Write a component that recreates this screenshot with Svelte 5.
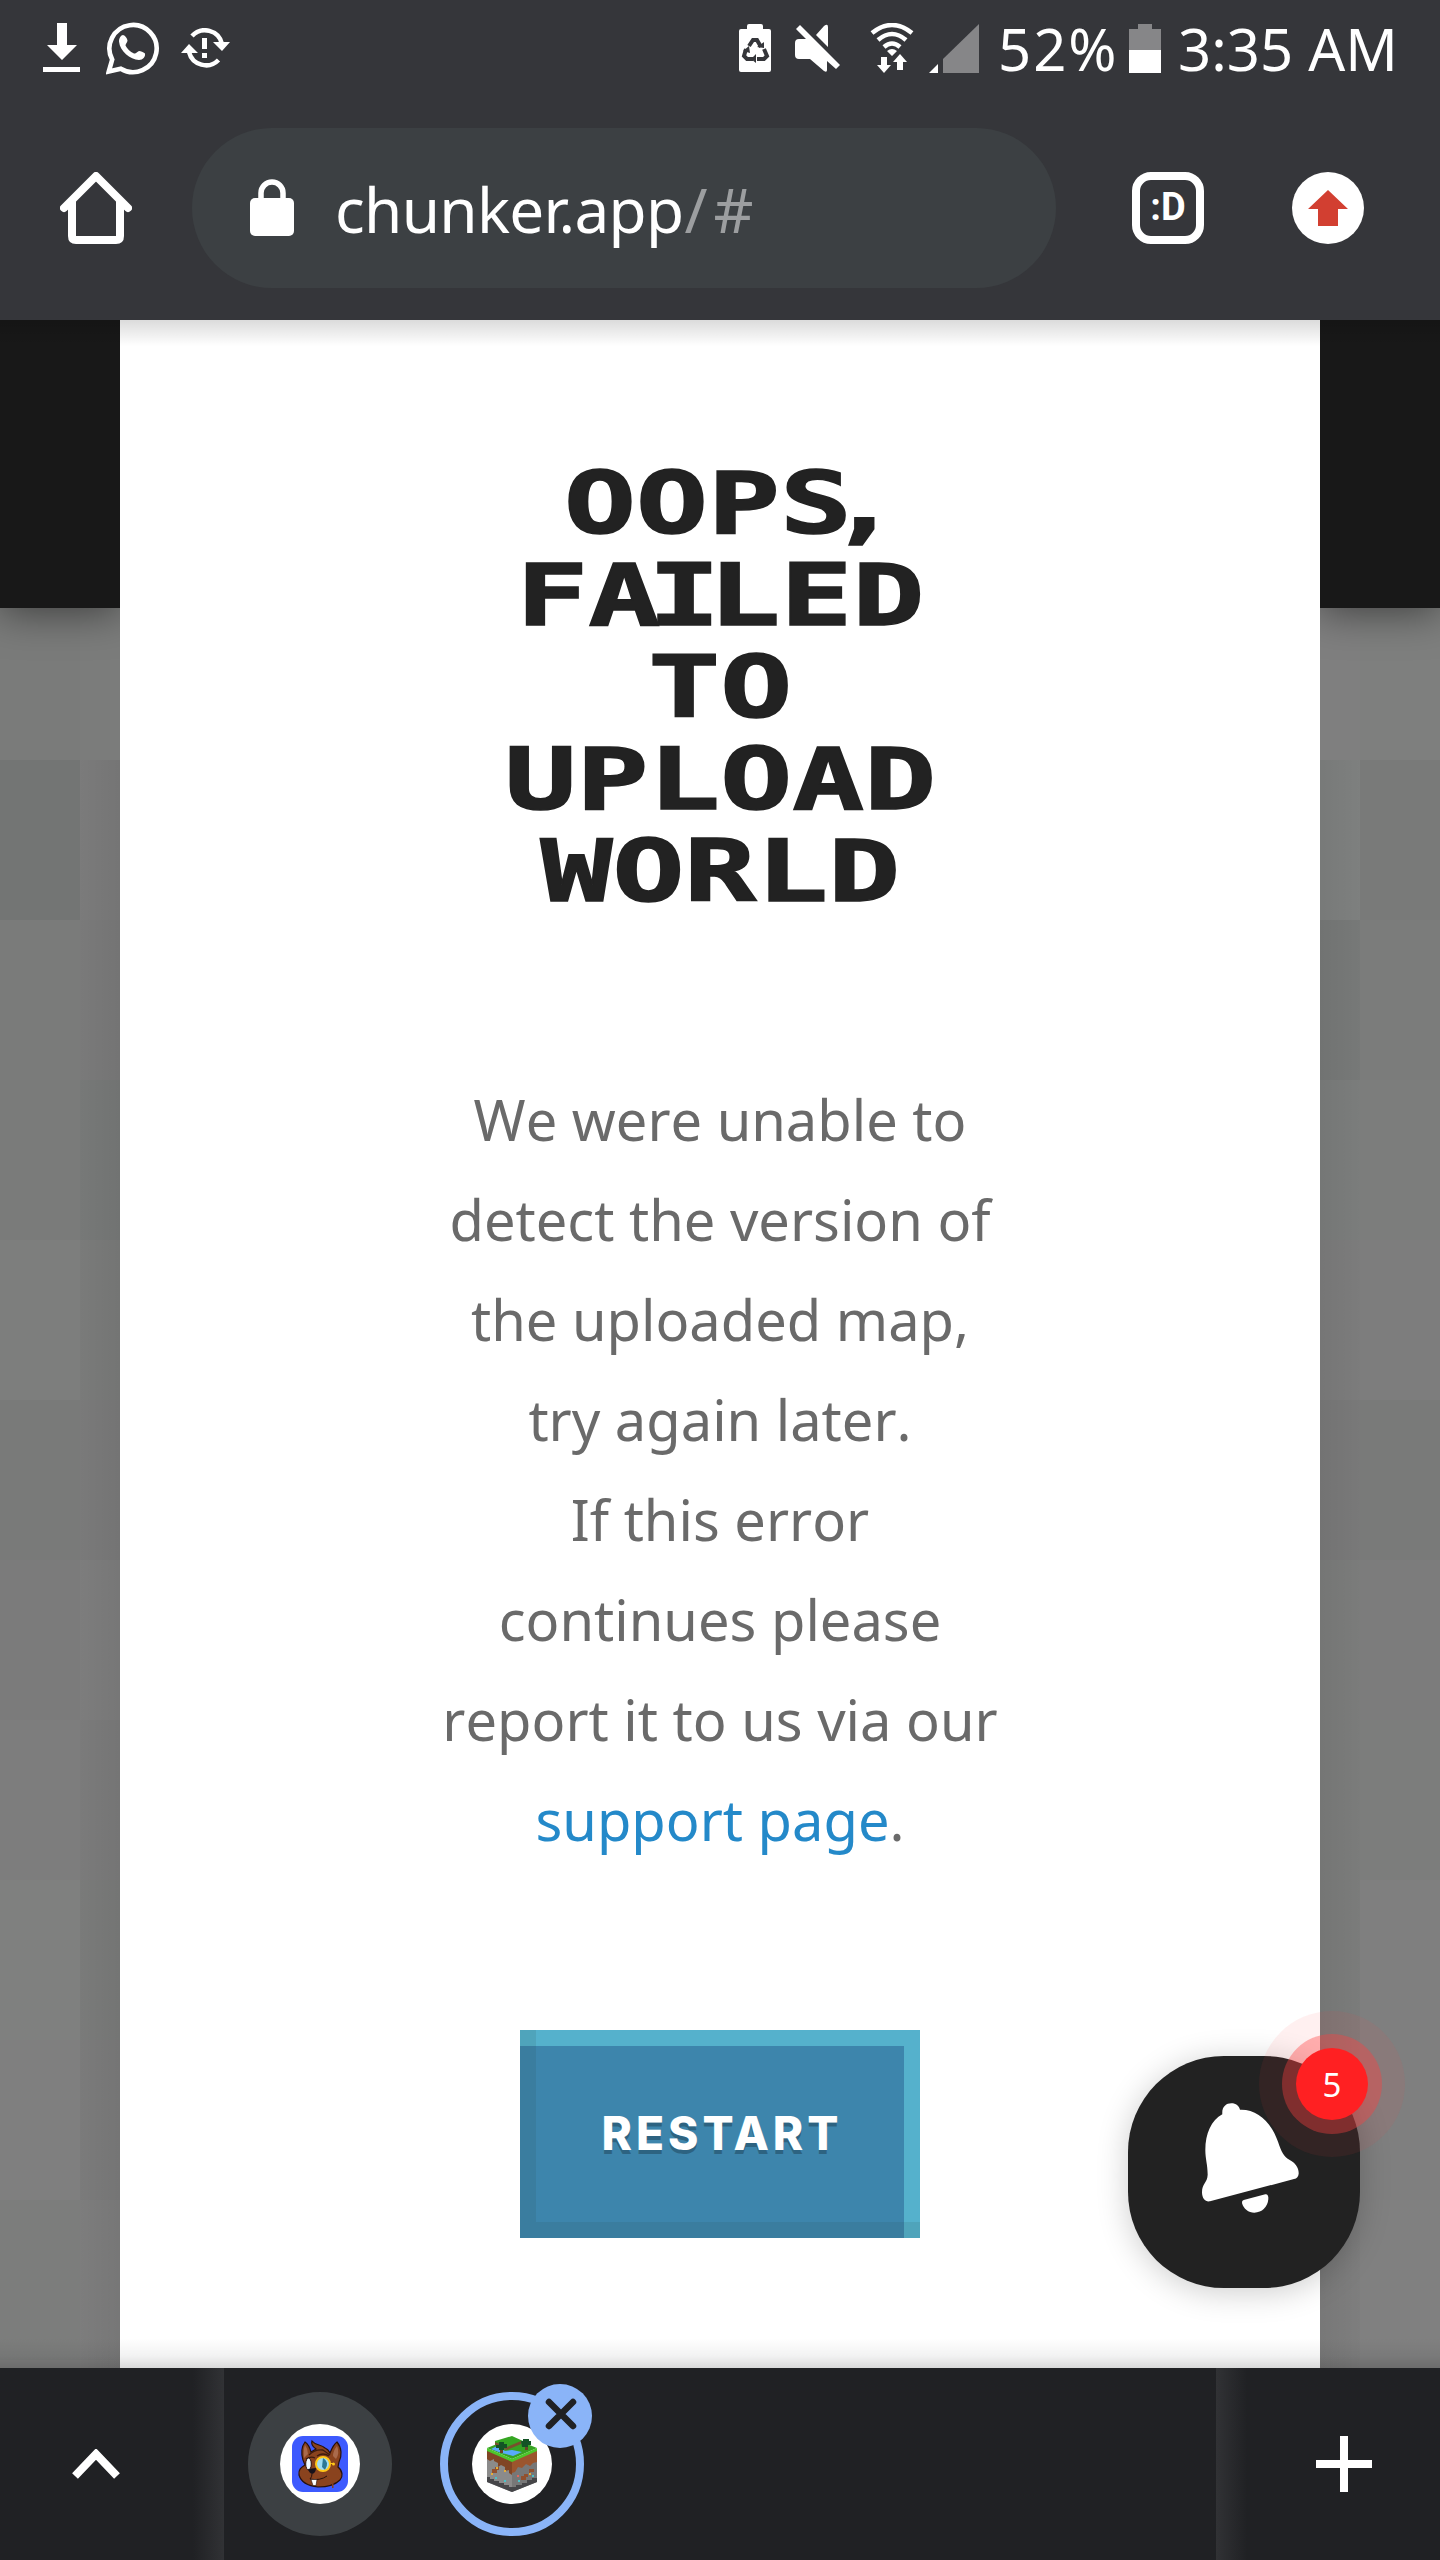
<script>
  const leftBlocks = [
    ['#7a7b7a', '#7b7c7b'],
    ['#737574', '#7b7b7b'],
    ['#7a7b7a', '#7a7a7a'],
    ['#7a7b7a', '#777978'],
    ['#7d7e7d', '#7a7b7a'],
    ['#797a79', '#7a7a7a'],
    ['#7b7b7b', '#7d7d7d'],
    ['#7d7d7d', '#7b7b7b'],
    ['#7f807f', '#7a7b7a'],
    ['#7f7f7f', '#7b7b7b'],
    ['#7c7d7c', '#7d7d7d']
  ]

  const rightBlocks = [
    ['#7f7f7f', '#7e7f7e'],
    ['#7e807f', '#797a79'],
    ['#777978', '#7b7c7b'],
    ['#7b7d7c', '#7c7d7c'],
    ['#7c7c7c', '#7d7d7d'],
    ['#797979', '#797a79'],
    ['#7b7c7b', '#7c7c7c'],
    ['#7b7c7b', '#7c7d7c'],
    ['#7b7c7b', '#7f7f7f'],
    ['#7d7e7d', '#7f7f7f'],
    ['#7e7e7e', '#808080']
  ]

  const message = [
    'We were unable to',
    'detect the version of',
    'the uploaded map,',
    'try again later.',
    'If this error',
    'continues please',
    'report it to us via our'
  ]
</script>

<div class="screen">
  <header class="chrome">
    <div class="status">
      <svg class="status__download" width="38" height="50" viewBox="0 0 38 50">
        <path d="M14 0h10v22h10L19 37 4 22h10zM0 44h37v5H0z" fill="#fff" />
      </svg>
      <svg class="status__whatsapp" width="54" height="54" viewBox="0 0 54 54" fill="none">
        <path d="M2.8 50.5 6.2 38.6A23.6 23.6 0 1 1 14.8 47.7Z" stroke="#fff" stroke-width="4.6" />
        <path
          d="M17 14c-2 0-4 3-4 6.500 1 10 11 18 20 18.500 4 0 6.500-3 6-6.500-2-1.500-4-2.500-6-2.500-2 1-3 3-5 2.500-4-1.500-7-5-8.500-8 0-2 2-3 2-5-.5-2-2-5-4.500-5.500z"
          fill="#fff"
        />
      </svg>
      <svg class="status__sync" width="50" height="40" viewBox="0 0 50 40" fill="none">
        <path d="M11 8A17.500 17.500 0 0 1 41 16M37.500 32A17.500 17.500 0 0 1 8 24" stroke="#fff" stroke-width="4.500" />
        <path d="M32 14h17l-8 9zM0 25h17L8 16zM21 10h5v11h-5zM21 25h5v5h-5z" fill="#fff" />
      </svg>
      <svg class="status__saver" width="32" height="48" viewBox="0 0 32 48">
        <path d="M8 5V2q0-2 2-2h12q2 0 2 2v3h6q2 0 2 2v39q0 2-2 2H2q-2 0-2-2V7q0-2 2-2z" fill="#fff" />
        <g fill="none" stroke="#35363a" stroke-width="4">
          <path d="m10 22 4-6h4l4 7M7 25l-2 7 3 3h6M25 25l3 7-3 3h-7" />
        </g>
        <path d="m18 23 7 1V18zM10 22 4 27l7 2zM17 30v9l-5-4z" fill="#35363a" />
      </svg>
      <svg class="status__mute" width="46" height="49" viewBox="0 0 46 49" fill="#fff">
        <path d="M1 5 5 1 45 41 41 45 32 37V46q0 3-3 1L15 35H4q-4 0-4-4V19q0-4 4-4h7zM21 11 29 2q4-3 4 1v20z" />
      </svg>
      <svg class="status__wifi" width="44" height="50" viewBox="0 0 44 50" fill="none">
        <path
          d="M2 10Q22-6 42 10M8 17Q22 5 36 17M14 24Q22 17 30 24"
          stroke="#fff"
          stroke-width="4.500"
        />
        <path d="m17 28q5-4 10 0l-5 5zM11 34h6v8h4l-7 8-7-8h4zM27 47V39h-4l7-8 7 8h-4v8z" fill="#fff" />
      </svg>
      <svg class="status__signal" width="50" height="49" viewBox="0 0 50 49">
        <path d="M14 35 50 0v49H14z" fill="#868688" />
        <path d="M0 49 9 40v9z" fill="#fff" />
      </svg>
      <span class="status__percent">52%</span>
      <svg class="status__battery" width="32" height="49" viewBox="0 0 32 49">
        <path d="M9 0h14v5h9v21H0V5h9z" fill="#868688" />
        <path d="M0 26h32v23H0z" fill="#fff" />
      </svg>
      <span class="status__time">3:35 AM</span>
    </div>

    <div class="toolbar">
      <svg class="toolbar__home" width="72" height="72" viewBox="0 0 72 72" fill="none">
        <path
          d="M4 36 36 4l32 32M12 29v35q0 4 4 4h40q4 0 4-4V29"
          stroke="#fff"
          stroke-width="8"
          stroke-linecap="round"
          stroke-linejoin="round"
        />
      </svg>
      <div class="address">
        <svg width="44" height="58" viewBox="0 0 44 58">
          <path d="M11 22V14a11 11 0 0 1 22 0v8" fill="none" stroke="#fff" stroke-width="5.500" />
          <rect y="19" width="44" height="38" rx="5" fill="#fff" />
        </svg>
        <span class="address__text">chunker.app<span class="address__path">/#</span></span>
      </div>
      <div class="tabs">:D</div>
      <svg class="toolbar__update" width="72" height="72" viewBox="0 0 72 72">
        <circle cx="36" cy="36" r="36" fill="#fff" />
        <path d="M36 18 56 37H46v17H26V37H16z" fill="#d23f31" />
      </svg>
    </div>
  </header>

  <main class="page">
    <div class="gutter gutter--left">
      <div class="navbar"></div>
      {#each leftBlocks as [outer, inner]}
        <div class="blocks">
          <i style="background: {outer}"></i>
          <i style="background: {inner}"></i>
        </div>
      {/each}
    </div>

    <section class="modal">
      <h1 class="modal__title">
        <span>OOP<b class="comma">S,</b></span>
        <span>F<b>AI</b>LED</span>
        <span>TO</span>
        <span>UPLOAD</span>
        <span>WORLD</span>
      </h1>
      <p class="modal__text">
        {#each message as line}
          {line}<br />
        {/each}
        <a href="#support">support page</a>.
      </p>
      <button class="restart">RESTART</button>
    </section>

    <div class="gutter gutter--right">
      <div class="navbar"></div>
      {#each rightBlocks as [inner, outer]}
        <div class="blocks">
          <i style="background: {inner}"></i>
          <i style="background: {outer}"></i>
        </div>
      {/each}
    </div>

    <div class="bell">
      <svg width="98" height="110" viewBox="366 368 294 330" fill="#fff">
        <path
          d="M427 402C425 380 438 369 454 369C468 369 477 377 480 388C532 386 573 425 594 484C604 513 611 529 628 538C646 547 657 563 656 580C655 589 651 594 642 596L390 663C377 666 366 655 366 636C366 608 382 608 383 583C383 554 376 535 376 510C376 459 394 420 427 402Z"
        />
        <path d="M491 659 556 642Q566 641 565 657C563 680 546 697 523 697C505 697 491 686 486 668Q485 661 491 659Z" />
      </svg>
      <span class="bell__badge">5</span>
    </div>
  </main>

  <footer class="strip">
    <div class="strip__side strip__side--left">
      <svg width="48" height="30" viewBox="0 0 48 30" fill="none">
        <path d="M3 27 24 5l21 22" stroke="#fff" stroke-width="8" />
      </svg>
    </div>
    <div class="strip__tabs">
      <div class="tab">
        <div class="tab__icon">
          <svg width="56" height="56" viewBox="0 0 56 56">
            <rect width="56" height="56" rx="11" fill="#3d5afe" />
            <path
              d="M11 24C9 17 10 10 13 6c3 2 5 6 6 10l5-3c-3-2-5-5-4-8 4 5 9 3 13 7 3 1 4 3 5 5 2-5 4-9 7-11 5 6 5 14 2 20l-1 5c5 4 5 10 2 13-6 6-13 7-22 7-9-1-17-5-19-12-1-6 3-8 6-10z"
              fill="#8a431e"
              stroke="#26100b"
              stroke-width="1.200"
            />
            <path d="M12 22q-1-8 1-13 3 4 3 9zM44 23q4-6 1-13-4 5-4 10z" fill="#a96a4c" />
            <path d="M17 19q6-6 14-5l7 5M14 23q5-3 9-1M25 20q6-4 12 0" fill="none" stroke="#3b1a0e" stroke-width="1.300" />
            <ellipse cx="16.500" cy="28" rx="2.800" ry="6" fill="#eefaff" stroke="#26100b" />
            <circle cx="31" cy="28" r="7" fill="#9edcf2" />
            <path d="M31 22q7 4 2 12l-3-3z" fill="#2c7894" />
            <circle cx="31" cy="28" r="7" fill="none" stroke="#ffc719" stroke-width="2" />
            <path d="M38 27.500h3" stroke="#ffc719" />
            <circle cx="41.500" cy="28" r="1.500" fill="#ffc719" />
            <path d="m16 33 8-1q0 5-4 6-3-1-4-5z" fill="#17121a" />
            <path d="M20 38q0 3-2 5 10 2 17-3" fill="none" stroke="#26100b" />
            <path d="M19 43.500h6l-1 6h-3z" fill="#fff" stroke="#26100b" stroke-width=".6" />
            <path d="M40 45h1.500v7H40z" fill="#86401c" />
          </svg>
        </div>
      </div>
      <div class="tab tab--active">
        <div class="tab__icon">
          <svg width="50" height="56" viewBox="0 0 50 56">
            <path d="M0 14 25 25v31L0 46z" fill="#8b8b8b" />
            <path d="m25 25 25-11v32L25 56z" fill="#777" />
            <path d="m0 14 25 11v14l-3-2v-3l-4 1v-4l-4-2-3 2v-4l-4-2v-2l-4 2-3-2z" fill="#804525" />
            <path d="m25 25 25-11v12l-4 1-3 3-4-2-4 4-4-1-3 5-3 1z" fill="#9b552d" />
            <path d="M0 41h3v2h4v2h5v2h5v2h5v2h3v5L0 46zM25 51h4v-2h6v-2h5v-3h5v-2h5v4L25 56z" fill="#464649" />
            <path d="m0 12 25-10 25 10-25 11z" fill="#36a222" />
            <path d="m4 13 6-3 8 5 7-1 10 2-9 4-7-2-5-1z" fill="#58aafa" />
            <path d="m8 5 17-5 11 5-16 7-12-4z" fill="#35a622" />
            <path d="m8 6 12 5 14-6v3l-14 6-12-5z" fill="#78502d" />
            <path d="m0 12 25 11 25-11v3L25 26 0 15z" fill="#4cc62b" />
            <path d="M13 11h3v6h-3zM38 8h3v6h-3z" fill="#694225" />
            <path d="M9 9h3V6h5v2h3v4h-3v2h-5v-2H9zM34 5h2V3h6v2h2v4h-3v2h-6z" fill="#135325" />
            <path d="M5 33h3v-2h4v3h-2v3H5zM34 40h3v-2h4v3h-2v3h-5zM42 33h5v3h-4v2h-1z" fill="#92502e" />
            <path d="M9 31h2v2H9zM17 34h2v2h-2zM4 37h2v2H4zM42 37h2v2h-2z" fill="#e5ae38" />
            <path d="M17 44h2v2h-2zM8 41h2v2H8zM31 44h2v2h-2zM45 39h2v2h-2z" fill="#4bc2c8" />
            <path d="M30 39h2v2h-2z" fill="#e4675e" />
          </svg>
        </div>
        <span class="tab__close">
          <svg width="64" height="64" viewBox="0 0 64 64">
            <path d="m21 18 24 24m0-24L21 42" stroke="#202124" stroke-width="6.500" stroke-linecap="round" />
          </svg>
        </span>
      </div>
    </div>
    <div class="strip__side strip__side--right">
      <svg width="56" height="56" viewBox="0 0 56 56">
        <path d="M24 0h8v24h24v8H32v24h-8V32H0v-8h24z" fill="#fff" />
      </svg>
    </div>
  </footer>
</div>

<style>
  :global(body) {
    margin: 0;
    background: #7f7f7f;
  }

  .screen {
    width: 1440px;
    height: 2560px;
    display: flex;
    flex-direction: column;
    overflow: hidden;
    font-family: 'Noto Sans', sans-serif;
  }

  svg {
    display: block;
    flex: none;
  }

  .chrome {
    height: 320px;
    background: #35363a;
    flex: none;
  }

  .status {
    height: 96px;
    display: flex;
    align-items: center;
    box-sizing: border-box;
    padding-left: 43px;
    color: #fff;
    font-size: 58px;
    line-height: 96px;
    white-space: nowrap;
  }

  .status__whatsapp {
    margin-left: 25px;
  }

  .status__sync {
    margin-left: 21px;
  }

  .status__saver {
    margin-left: 508px;
  }

  .status__mute {
    margin-left: 24px;
  }

  .status__wifi {
    margin-left: 29px;
  }

  .status__signal {
    margin-left: 15px;
  }

  .status__percent {
    margin-left: 19px;
    width: 119px;
    padding-top: 2px;
    letter-spacing: 2px;
  }

  .status__battery {
    margin-left: 12px;
  }

  .status__time {
    margin-left: 17px;
    padding-top: 2px;
  }

  .toolbar {
    height: 224px;
    box-sizing: border-box;
    padding: 32px 0 32px 60px;
    display: flex;
    align-items: center;
  }

  .address {
    width: 864px;
    height: 160px;
    margin-left: 60px;
    border-radius: 80px;
    background: #3c4043;
    display: flex;
    align-items: center;
    box-sizing: border-box;
    padding-left: 58px;
  }

  .address__text {
    margin-left: 41px;
    padding-top: 2px;
    font-size: 62px;
    line-height: 80px;
    letter-spacing: -0.7px;
    color: #fff;
  }

  .address__path {
    margin-left: 1px;
    color: #9c9ea0;
    letter-spacing: 6px;
  }

  .tabs {
    width: 72px;
    height: 72px;
    margin-left: 76px;
    box-sizing: border-box;
    border: 8px solid #fff;
    border-radius: 19px;
    color: #fff;
    font: bold 38px/54px 'Roboto', sans-serif;
    text-align: center;
  }

  .toolbar__update {
    margin-left: 88px;
  }

  .page {
    height: 2048px;
    display: flex;
    position: relative;
    flex: none;
  }

  .page::before,
  .page::after {
    content: '';
    position: absolute;
    left: 0;
    right: 0;
    z-index: 2;
  }

  .page::before {
    top: 0;
    height: 26px;
    background: linear-gradient(rgba(0, 0, 0, 0.14), rgba(0, 0, 0, 0));
  }

  .page::after {
    bottom: 0;
    height: 30px;
    background: linear-gradient(rgba(0, 0, 0, 0), rgba(0, 0, 0, 0.05) 60%, rgba(0, 0, 0, 0.15));
  }

  .gutter {
    width: 120px;
    overflow: hidden;
    position: relative;
  }

  .gutter::after {
    content: '';
    position: absolute;
    top: 440px;
    bottom: 0;
    width: 42px;
  }

  .gutter--left::after {
    right: 0;
    background: linear-gradient(to right, rgba(0, 0, 0, 0), rgba(0, 0, 0, 0.05));
  }

  .gutter--right::after {
    left: 0;
    background: linear-gradient(to left, rgba(0, 0, 0, 0), rgba(0, 0, 0, 0.05));
  }

  .navbar {
    height: 288px;
    background: #181818;
    box-shadow: 0 4px 40px rgba(0, 0, 0, 0.5);
    position: relative;
  }

  .blocks {
    height: 160px;
    display: flex;
  }

  .navbar + .blocks {
    height: 152px;
  }

  .blocks i {
    width: 80px;
  }

  .gutter--left i:last-child,
  .gutter--right i:first-child {
    width: 40px;
  }

  .modal {
    width: 1200px;
    background: #fff;
    display: flex;
    flex-direction: column;
    align-items: center;
  }

  .modal__title {
    margin: 137px 0 0;
    font: bold 86px/92px 'DejaVu Sans Mono', monospace;
    color: #222;
    -webkit-text-stroke: 1.5px #222;
    transform: scaleX(1.39);
  }

  .modal__title span {
    display: block;
    text-align: center;
  }

  .modal__title b {
    letter-spacing: -8.5px;
  }

  .modal__title .comma {
    letter-spacing: -17px;
  }

  .modal__text {
    margin: 152px 0 0;
    font-size: 56px;
    line-height: 100px;
    font-kerning: none;
    color: #6a6a6a;
    text-align: center;
  }

  .modal__text a {
    color: #2489c9;
    text-decoration: none;
  }

  .restart {
    width: 400px;
    height: 208px;
    margin: 161px 0 0;
    padding: 0 0 2px 4px;
    border: 0;
    background: #3d85ac;
    box-shadow:
      inset 16px -16px rgba(42, 76, 76, 0.13),
      inset -16px 16px #55b1cc;
    font: 800 46px 'Inter', sans-serif;
    letter-spacing: 4px;
    color: #fff;
    text-shadow: 0 4px rgba(0, 0, 0, 0.25);
  }

  .bell {
    position: absolute;
    z-index: 3;
    left: 1128px;
    top: 1736px;
    width: 232px;
    height: 232px;
    box-sizing: border-box;
    padding: 47px 0 0 74px;
    border-radius: 96px;
    background: #222;
    box-shadow: 0 4px 32px rgba(0, 0, 0, 0.2);
  }

  .bell__badge {
    position: absolute;
    left: 168px;
    top: -8px;
    width: 72px;
    height: 72px;
    border-radius: 50%;
    background: #ff2022;
    box-shadow:
      0 0 0 14px rgba(255, 64, 64, 0.38),
      0 0 0 37px rgba(255, 64, 64, 0.08);
    color: #fff;
    font-size: 33px;
    line-height: 73px;
    text-align: center;
  }

  .strip {
    height: 192px;
    background: #202124;
    display: flex;
    flex: none;
  }

  .strip__side {
    width: 224px;
    display: flex;
    align-items: center;
    box-sizing: border-box;
  }

  .strip__side--left {
    padding-left: 72px;
    background: linear-gradient(to left, #313235, #202124 31px);
  }

  .strip__side--right {
    padding-left: 100px;
    background: linear-gradient(to right, #313235, #202124 31px);
  }

  .strip__tabs {
    width: 992px;
    box-sizing: border-box;
    padding-left: 24px;
    display: flex;
    align-items: center;
    gap: 48px;
  }

  .tab {
    position: relative;
    width: 144px;
    height: 144px;
    box-sizing: border-box;
    border-radius: 50%;
    background: #3c4043;
    display: flex;
    align-items: center;
    justify-content: center;
  }

  .tab--active {
    border: 8px solid #8ab4f8;
    background: #202124;
  }

  .tab__icon {
    width: 80px;
    height: 80px;
    border-radius: 50%;
    background: #fff;
    display: flex;
    align-items: center;
    justify-content: center;
  }

  .tab__close {
    position: absolute;
    left: 80px;
    top: -16px;
    border-radius: 50%;
    background: #8ab4f8;
  }
</style>
